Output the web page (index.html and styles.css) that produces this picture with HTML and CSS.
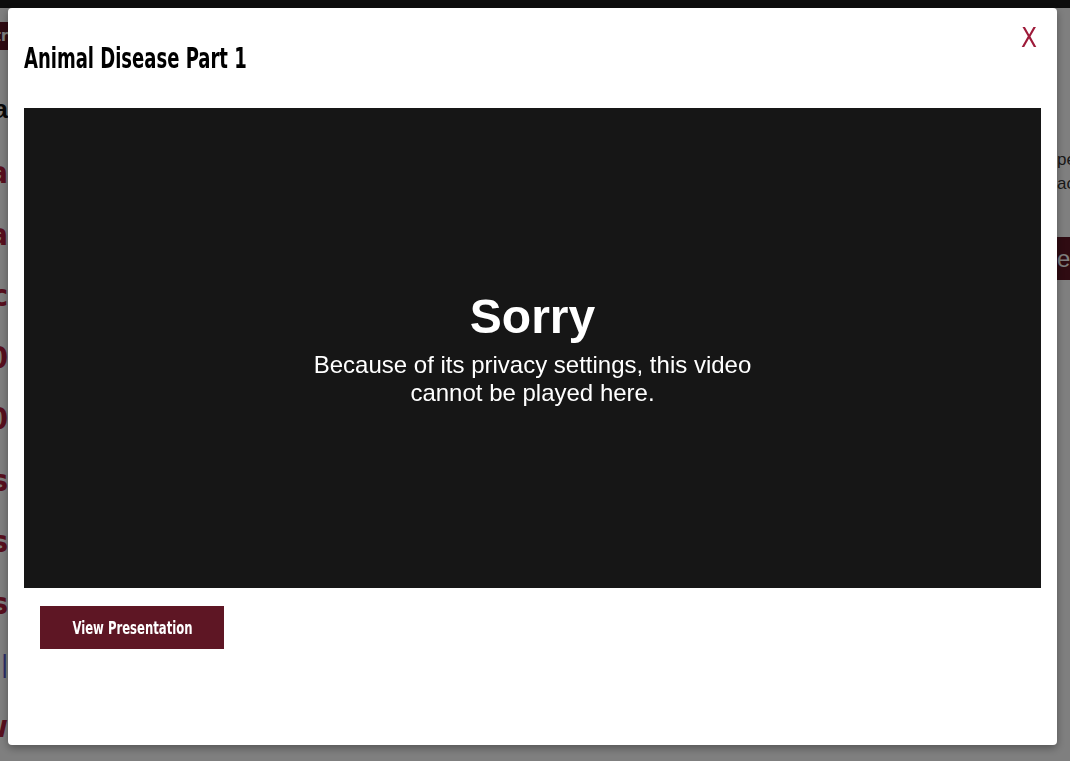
FILE: index.html
```html
<!DOCTYPE html>
<html lang="en">
<head>
<meta charset="utf-8">
<title>Animal Disease Part 1</title>
<link rel="stylesheet" href="styles.css">
</head>
<body>
<div class="topbar"></div>
<div class="page">
  <div class="bg-left">
    <div class="bg-tag"><span>Intr</span></div>
    <div class="bg-heading"><span>Data</span></div>
    <div class="bg-link"><span>Part 1 Pa</span></div>
    <div class="bg-link"><span>Part 2 Pa</span></div>
    <div class="bg-link"><span>Disease Inc</span></div>
    <div class="bg-link"><span>Week 10</span></div>
    <div class="bg-link"><span>Week 20</span></div>
    <div class="bg-link"><span>Sessions</span></div>
    <div class="bg-link"><span>Sessions</span></div>
    <div class="bg-link"><span>Sessions</span></div>
    <div class="bg-bar"><span>|</span></div>
    <div class="bg-link"><span>View</span></div>
  </div>
  <div class="bg-right">
    <p class="bg-text">people<br>access</p>
    <div class="bg-btn">enter</div>
  </div>
</div>
<div class="overlay"></div>
<div class="modal" role="dialog" aria-labelledby="modal-title">
  <div class="modal-header">
    <h2 class="modal-title" id="modal-title">Animal Disease Part 1</h2>
    <button class="modal-close" type="button" aria-label="Close">X</button>
  </div>
  <div class="video">
    <div class="video-msg">
      <div class="video-title">Sorry</div>
      <div class="video-text">Because of its privacy settings, this video cannot be played here.</div>
    </div>
  </div>
  <div class="modal-actions">
    <button class="btn-primary" type="button"><span class="btn-label">View Presentation</span></button>
  </div>
</div>
</body>
</html>
```
FILE: styles.css
```css
* { box-sizing: border-box; }
html, body { margin: 0; padding: 0; }
body {
  background: #ffffff;
  font-family: "Liberation Sans", Arial, sans-serif;
  height: 100vh;
  overflow: hidden;
}
.topbar {
  height: 8px;
  background: #1a1a1a;
}
.page {
  display: flex;
  justify-content: space-between;
  height: calc(100vh - 8px);
}
.bg-left {
  width: 8px;
  overflow: hidden;
  display: flex;
  flex-direction: column;
  align-items: flex-end;
}
.bg-left > div {
  display: flex;
  justify-content: flex-end;
  white-space: nowrap;
  width: 8px;
}
.bg-tag {
  margin-top: 14px;
  height: 28px;
  line-height: 28px;
  background: #5e1624;
  color: #ffffff;
  font-family: "DejaVu Sans Condensed", sans-serif;
  font-weight: bold;
  font-size: 16px;
}
.bg-heading {
  margin-top: 44px;
  height: 30px;
  line-height: 30px;
  font-size: 26px;
  font-weight: bold;
  color: #111111;
}
.bg-link {
  height: 61.5px;
  line-height: 61.5px;
  font-size: 30px;
  font-weight: bold;
  color: #b01e3c;
  font-family: "DejaVu Sans Condensed", sans-serif;
}
.bg-link:nth-child(3) { margin-top: 18px; }
.bg-bar {
  height: 61.5px;
  line-height: 61.5px;
  font-size: 26px;
  color: #5a5ad0;
}
.bg-right {
  width: 13px;
  overflow: hidden;
  white-space: nowrap;
}
.bg-text {
  margin: 140px 0 0;
  font-size: 17px;
  line-height: 24px;
  color: #333333;
}
.bg-btn {
  margin-top: 41px;
  height: 43px;
  line-height: 43px;
  background: #5e1624;
  color: #ffffff;
  font-size: 24px;
}
.overlay {
  position: fixed;
  inset: 0;
  background: rgba(0, 0, 0, 0.5);
}
.modal {
  position: fixed;
  left: 8px;
  top: 8px;
  width: 1049px;
  height: 737px;
  background: #ffffff;
  border-radius: 4px;
  box-shadow: 0 3px 8px rgba(0, 0, 0, 0.35);
  padding: 16px;
  display: flex;
  flex-direction: column;
}
.modal-header {
  height: 84px;
  display: flex;
  justify-content: space-between;
  align-items: flex-start;
}
.modal-title {
  margin: 17px 0 0;
  font-family: "DejaVu Sans Condensed", sans-serif;
  font-weight: bold;
  font-size: 29px;
  line-height: 34px;
  color: #000000;
  white-space: nowrap;
  transform: scaleX(0.69);
  transform-origin: left center;
}
.modal-close {
  margin: 0 4px 0 0;
  padding: 0;
  border: 0;
  background: none;
  font-family: "DejaVu Sans Condensed", sans-serif;
  font-size: 26px;
  line-height: 28px;
  color: #9e1b3a;
  cursor: pointer;
}
.video {
  height: 480px;
  background: #161616;
  display: flex;
  align-items: center;
  justify-content: center;
}
.video-msg {
  max-width: 470px;
  margin-top: 3px;
  text-align: center;
  color: #ffffff;
  font-family: "Liberation Sans", Arial, sans-serif;
}
.video-title {
  font-size: 48px;
  font-weight: bold;
  line-height: 50px;
}
.video-text {
  margin-top: 9px;
  font-size: 24px;
  line-height: 28px;
}
.modal-actions {
  padding: 18px 16px 0;
}
.btn-primary {
  width: 184px;
  height: 43px;
  padding: 0;
  border: 0;
  background: #5e1624;
  color: #ffffff;
  font-family: "DejaVu Sans Condensed", sans-serif;
  font-weight: bold;
  font-size: 18px;
  cursor: pointer;
  display: flex;
  align-items: center;
  justify-content: center;
}
.btn-label {
  display: inline-block;
  white-space: nowrap;
  transform: scaleX(0.72);
}
```
